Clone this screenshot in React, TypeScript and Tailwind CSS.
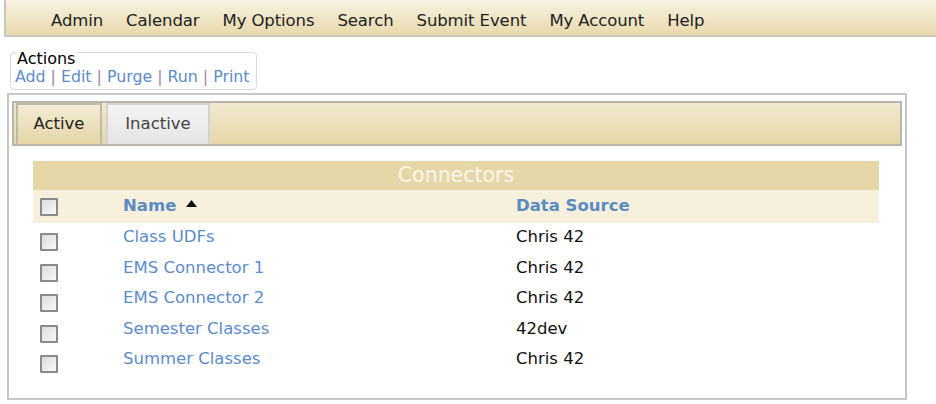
import { useState } from "react";

const navItems = ["Admin", "Calendar", "My Options", "Search", "Submit Event", "My Account", "Help"];
const actions = ["Add", "Edit", "Purge", "Run", "Print"];
const connectors = [
  { name: "Class UDFs", source: "Chris 42" },
  { name: "EMS Connector 1", source: "Chris 42" },
  { name: "EMS Connector 2", source: "Chris 42" },
  { name: "Semester Classes", source: "42dev" },
  { name: "Summer Classes", source: "Chris 42" },
];

function Box() {
  return (
    <span className="block w-[18px] h-[18px] border-2 border-[#8a8a8a] bg-gradient-to-br from-[#dcdcdc] to-[#f8f8f8] rounded-[1px]" />
  );
}

export default function App() {
  const [tab, setTab] = useState("Active");

  return (
    <div className="w-[936px] h-[404px] bg-white overflow-hidden font-['DejaVu_Sans',Verdana,sans-serif]">
      {/* top nav */}
      <div className="ml-[4px] h-[37px] flex items-center pl-[45px] gap-[23px] text-[16.5px] tracking-[-0.1px] text-[#222] border-l-2 border-b-2 border-[#c9c6bd] bg-gradient-to-b from-[#f7f2e2] to-[#e9d9ab]">
        {navItems.map((n) => (
          <span key={n} className="pt-[8px]">{n}</span>
        ))}
      </div>

      {/* actions */}
      <div className="ml-[10px] mt-[15px] w-[247px] h-[38px] border border-[#d4dbe6] rounded-[4px] pl-[4px] relative">
        <div className="absolute left-[5px] top-[-3px] bg-white px-[1px] text-[16px] leading-[18px] text-black">Actions</div>
        <div className="pt-[14px] text-[15.8px] leading-[20px] text-[#5b8ccc] whitespace-nowrap">
          {actions.map((a, i) => (
            <span key={a}>
              {i > 0 && <span className="text-[#9a86a8]"> | </span>}
              {a}
            </span>
          ))}
        </div>
      </div>

      {/* main panel */}
      <div className="ml-[7px] mt-[3px] w-[900px] h-[307px] border-2 border-[#c6c6c6] pt-[6px] px-[3px]">
        <div className="h-[45px] border-2 border-[#b9b5aa] bg-gradient-to-b from-[#f1e9cf] to-[#e6d7a7] flex items-end pl-[2px] gap-[4px]">
          {["Active", "Inactive"].map((t) => (
            <button
              key={t}
              onClick={() => setTab(t)}
              className={`h-[41px] text-[16.5px] border-2 border-b-0 ${
                t === "Active"
                  ? "w-[86px] text-[#222] border-[#bfb9a8] bg-gradient-to-b from-[#f3ecd5] to-[#e5d5a6]"
                  : "w-[104px] text-[#444] border-[#d2d2d2] bg-gradient-to-b from-[#f4f4f4] to-[#e4e4e4]"
              }`}
            >
              {t}
            </button>
          ))}
        </div>

        <div className="mx-[21px] mt-[15px] w-[846px]">
          <div className="h-[29px] bg-[#e6d7a9] text-center text-[20.5px] leading-[29px] text-[#fbf7ea]">Connectors</div>
          <div className="h-[33px] bg-[#f6f0dc] flex items-center text-[16.5px] font-bold text-[#5a8cc2]">
            <div className="w-[90px] pl-[7px] pt-[1px]"><Box /></div>
            <div className="w-[393px] flex items-center gap-[10px]">
              Name
              <svg width="11" height="7" viewBox="0 0 11 7" className="mb-[6px]"><polygon points="5.5,0 11,7 0,7" fill="#111" /></svg>
            </div>
            <div>Data Source</div>
          </div>
          {connectors.map((c) => (
            <div key={c.name} className="h-[30.5px] flex items-center text-[16.5px]">
              <div className="w-[90px] pl-[7px] pt-[8px]"><Box /></div>
              <div className="w-[393px] text-[#5b8ccc] pb-[1px]">{c.name}</div>
              <div className="text-[#111] pb-[1px]">{c.source}</div>
            </div>
          ))}
        </div>
      </div>
    </div>
  );
}
